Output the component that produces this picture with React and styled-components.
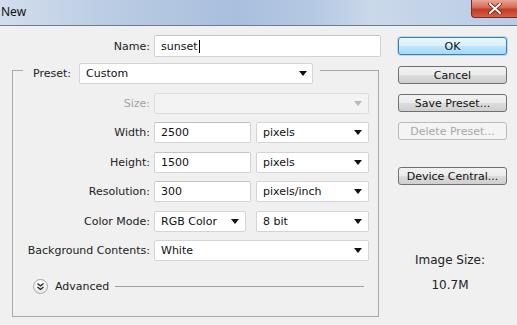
import React from 'react';
import styled, { createGlobalStyle } from 'styled-components';

const GlobalStyle = createGlobalStyle`
  body {
    margin: 0;
    background: #f0f0f0;
  }
`;

const Window = styled.div`
  width: 517px;
  height: 325px;
  overflow: hidden;
  background: #f0f0f0;
  font-family: 'DejaVu Sans', sans-serif;
  font-size: 11px;
  color: #222;
`;

const TitleBar = styled.div`
  position: relative;
  height: 25px;
  border-bottom: 1px solid #6d7d8f;
  background: linear-gradient(
    90deg,
    #d2deec 0%,
    #bccde4 20%,
    #a9bfde 45%,
    #b4c8e3 60%,
    #cad8ea 72%,
    #b9cce5 100%
  );
  display: flex;
  align-items: center;
`;

const Title = styled.span`
  font-family: 'Noto Sans', sans-serif;
  font-size: 12px;
  margin-left: 1px;
  margin-top: -2px;
  color: #111;
`;

const CloseButton = styled.div`
  position: absolute;
  top: 0;
  right: 0;
  width: 45px;
  height: 17px;
  border: 1px solid #7d2a20;
  border-top: none;
  border-right: none;
  border-radius: 0 0 0 4px;
  background: linear-gradient(180deg, #e9a797 0%, #d46a55 45%, #c23b26 55%, #d4604a 100%);
  display: flex;
  align-items: center;
  justify-content: center;
`;

const Body = styled.div`
  display: flex;
  padding-top: 9px;
`;

const FormCol = styled.div`
  width: 385px;
  display: flex;
  flex-direction: column;
`;

const Label = styled.span`
  width: ${p => p.$width || 127}px;
  flex: none;
  text-align: right;
  margin-right: 4px;
  white-space: nowrap;
  color: ${p => (p.$disabled ? '#a3a3a3' : '#222')};
`;

const Row = styled.div`
  display: flex;
  align-items: center;
  height: 21px;
`;

const NameRow = styled(Row)`
  height: 22px;
`;

const TextBox = styled.div`
  width: ${p => p.$w}px;
  height: ${p => p.$h || 21}px;
  box-sizing: border-box;
  background: #fff;
  border: 1px solid #d2d2d2;
  border-top-color: #c4c4c4;
  border-radius: 2px;
  padding-left: 6px;
  display: flex;
  align-items: center;
  flex: none;
  color: #111;
`;

const Caret = styled.span`
  display: inline-block;
  width: 1px;
  height: 13px;
  background: #000;
  margin-left: 1px;
`;

const SelectBox = styled.div`
  width: ${p => p.$w}px;
  height: 21px;
  box-sizing: border-box;
  background: ${p => (p.$disabled ? '#f3f3f3' : '#fff')};
  border: 1px solid ${p => (p.$disabled ? '#dcdcdc' : '#d4d4d4')};
  border-radius: 2px;
  padding: 0 ${p => p.$arrowPad || 6}px 0 6px;
  display: flex;
  align-items: center;
  justify-content: space-between;
  flex: none;
  color: #111;
  margin-left: ${p => p.$ml || 0}px;
`;

const Arrow = styled.span`
  width: 0;
  height: 0;
  border-left: 4px solid transparent;
  border-right: 4px solid transparent;
  border-top: 5px solid ${p => (p.$disabled ? '#b8b8b8' : '#111')};
`;

const Group = styled.fieldset`
  margin: 0 0 0 12px;
  width: 367px;
  box-sizing: border-box;
  border: 1px solid #a8a8a8;
  padding: 0 0 22px 10px;
  display: flex;
  flex-direction: column;
  gap: 8.6px;
`;

const Legend = styled.legend`
  padding: 6px 7px 0 10px;
  display: flex;
  align-items: center;
`;

const LegendLabel = styled.span`
  margin-right: 8px;
`;

const FirstRow = styled(Row)`
  margin-top: 8.5px;
`;

const AdvancedRow = styled.div`
  display: flex;
  align-items: center;
  height: 16px;
  margin-top: 8px;
  padding-left: 10px;
`;

const AdvIcon = styled.div`
  width: 15px;
  height: 15px;
  border-radius: 50%;
  box-sizing: border-box;
  border: 1px solid #a6a6a6;
  background: linear-gradient(180deg, #ffffff 0%, #e8e8e8 100%);
  display: flex;
  align-items: center;
  justify-content: center;
  flex: none;
`;

const AdvText = styled.span`
  margin-left: 7px;
  font-size: 11px;
`;

const AdvLine = styled.div`
  width: 249px;
  height: 1px;
  background: #a0a0a0;
  margin-left: 6px;
`;

const ButtonCol = styled.div`
  margin-left: 13px;
  padding-top: 2px;
  width: 109px;
  display: flex;
  flex-direction: column;
`;

const Button = styled.div`
  height: 18px;
  box-sizing: border-box;
  border-radius: 3px;
  display: flex;
  align-items: center;
  justify-content: center;
  font-size: 11px;
  margin-top: ${p => p.$mt || 0}px;
  border: 1px solid ${p => (p.$primary ? '#3c7fb1' : p.$disabled ? '#b9bcbf' : '#707070')};
  background: ${p =>
    p.$primary
      ? 'linear-gradient(180deg, #eaf6fd 0%, #d9f0fc 50%, #bee6fd 51%, #a7d9f5 100%)'
      : p.$disabled
      ? '#f4f4f4'
      : 'linear-gradient(180deg, #f2f2f2 0%, #ebebeb 50%, #dddddd 51%, #cfcfcf 100%)'};
  color: ${p => (p.$disabled ? '#a8a8a8' : '#111')};
  box-shadow: ${p => (p.$primary ? '0 0 0 1px rgba(90, 170, 220, 0.35)' : 'none')};
`;

const SizeInfo = styled.div`
  margin-top: 63px;
  padding-right: 5px;
  text-align: center;
  line-height: 25px;
  font-size: 12px;
`;

const Select = ({ w, children, disabled, ml, arrowPad }) => (
  <SelectBox $w={w} $disabled={disabled} $ml={ml} $arrowPad={arrowPad}>
    <span>{children}</span>
    <Arrow $disabled={disabled} />
  </SelectBox>
);

const fields = [
  { label: 'Width:', value: '2500', unit: 'pixels' },
  { label: 'Height:', value: '1500', unit: 'pixels' },
  { label: 'Resolution:', value: '300', unit: 'pixels/inch' },
];

export default function App() {
  return (
    <Window>
      <GlobalStyle />
      <TitleBar>
        <Title>New</Title>
        <CloseButton>
          <svg width="14" height="11" viewBox="0 0 14 11">
            <path d="M2 1 L12 10 M12 1 L2 10" stroke="#6b2015" strokeWidth="3.6" strokeLinecap="round" />
            <path d="M2 1 L12 10 M12 1 L2 10" stroke="#ffffff" strokeWidth="2" strokeLinecap="round" />
          </svg>
        </CloseButton>
      </TitleBar>
      <Body>
        <FormCol>
          <NameRow>
            <Label $width={150}>Name:</Label>
            <TextBox $w={227} $h={22}>
              sunset
              <Caret />
            </TextBox>
          </NameRow>

          <Group>
            <Legend>
              <LegendLabel>Preset:</LegendLabel>
              <Select w={234} arrowPad={5}>Custom</Select>
            </Legend>

            <FirstRow>
              <Label $disabled>Size:</Label>
              <Select w={215} disabled />
            </FirstRow>

            {fields.map(f => (
              <Row key={f.label}>
                <Label>{f.label}</Label>
                <TextBox $w={97}>{f.value}</TextBox>
                <Select w={113} ml={5}>{f.unit}</Select>
              </Row>
            ))}

            <Row>
              <Label>Color Mode:</Label>
              <Select w={92}>RGB Color</Select>
              <Select w={113} ml={10}>8 bit</Select>
            </Row>

            <Row>
              <Label>Background Contents:</Label>
              <Select w={215}>White</Select>
            </Row>

            <AdvancedRow>
              <AdvIcon>
                <svg width="9" height="9" viewBox="0 0 9 9">
                  <path d="M1.5 1.5 L4.5 4 L7.5 1.5 M1.5 5 L4.5 7.5 L7.5 5" fill="none" stroke="#222" strokeWidth="1.3" />
                </svg>
              </AdvIcon>
              <AdvText>Advanced</AdvText>
              <AdvLine />
            </AdvancedRow>
          </Group>
        </FormCol>

        <ButtonCol>
          <Button $primary>OK</Button>
          <Button $mt={11}>Cancel</Button>
          <Button $mt={10}>Save Preset...</Button>
          <Button $mt={10} $disabled>Delete Preset...</Button>
          <Button $mt={27}>Device Central...</Button>
          <SizeInfo>
            Image Size:
            <br />
            10.7M
          </SizeInfo>
        </ButtonCol>
      </Body>
    </Window>
  );
}
